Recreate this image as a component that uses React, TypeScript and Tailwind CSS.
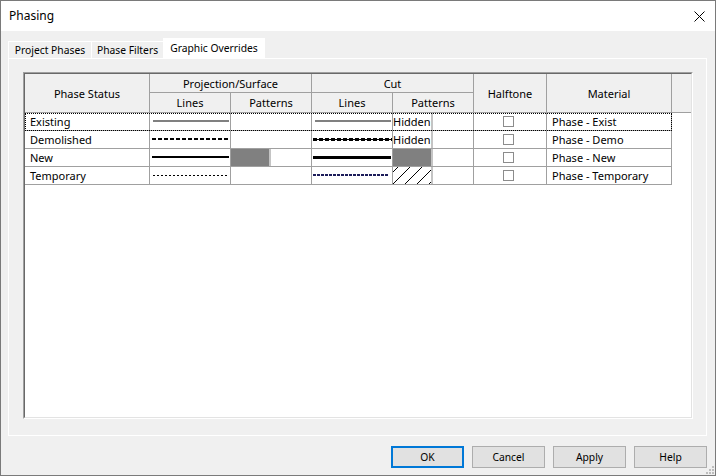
import React from 'react';

interface LineStyle {
    color: string;
    w: number;
    dash?: string;
    core?: boolean;
    x1: number;
    x2: number;
}

type Pattern = 'hidden' | 'solid' | 'hatch' | null;

interface PhaseRow {
    status: string;
    proj: LineStyle;
    projPat: Pattern;
    cut: LineStyle;
    cutPat: Pattern;
    material: string;
}

const rows: PhaseRow[] = [
    {
        status: 'Existing',
        proj: { color: '#808080', w: 2, x1: 3, x2: 79 },
        projPat: null,
        cut: { color: '#808080', w: 2, x1: 3, x2: 79 },
        cutPat: 'hidden',
        material: 'Phase - Exist',
    },
    {
        status: 'Demolished',
        proj: { color: '#000000', w: 2, dash: '4 2', x1: 2, x2: 80 },
        projPat: null,
        cut: { color: '#000000', w: 3, dash: '4 2', core: true, x1: 1, x2: 80 },
        cutPat: 'hidden',
        material: 'Phase - Demo',
    },
    {
        status: 'New',
        proj: { color: '#000000', w: 2, x1: 2, x2: 79 },
        projPat: 'solid',
        cut: { color: '#000000', w: 3, x1: 1, x2: 79 },
        cutPat: 'solid',
        material: 'Phase - New',
    },
    {
        status: 'Temporary',
        proj: { color: '#000000', w: 1, dash: '2 2', x1: 3, x2: 77 },
        projPat: null,
        cut: { color: '#1c1c5a', w: 2, dash: '3 1', x1: 1, x2: 77 },
        cutPat: 'hatch',
        material: 'Phase - Temporary',
    },
];

const LineSample: React.FC<{ line: LineStyle }> = ({ line }) => {
    const y = line.w % 2 ? 8.5 : 8;
    return (
        <svg width="80" height="17" className="block">
            {line.core && <line x1={line.x1} x2={line.x2} y1="8.5" y2="8.5" stroke={line.color} strokeWidth="1" />}
            <line
                x1={line.x1}
                x2={line.x2}
                y1={y}
                y2={y}
                stroke={line.color}
                strokeWidth={line.w}
                strokeDasharray={line.dash}
            />
        </svg>
    );
};

const PatternSample: React.FC<{ pattern: Pattern; edge: boolean }> = ({ pattern, edge }) => {
    if (!pattern && !edge) return null;
    return (
        <div className="flex h-full">
            <div className={`w-[38px] h-full flex items-center overflow-hidden ${pattern === 'solid' ? 'bg-[#808080]' : ''}`}>
                {pattern === 'hidden' && <span className="leading-none">Hidden</span>}
                {pattern === 'hatch' && (
                    <svg width="38" height="17" className="block">
                        {[-12, 0, 12, 24, 36].map(x => (
                            <line key={x} x1={x} y1="17" x2={x + 17} y2="0" stroke="#000" strokeWidth="1" />
                        ))}
                    </svg>
                )}
            </div>
            <div className="w-[2px] h-full bg-[#c4c4c4]" />
        </div>
    );
};

const cols = 'grid grid-cols-[125px_81px_81px_81px_81px_73px_125px_1fr]';
const hcell = 'flex items-center justify-center border-r border-b border-[#a0a0a0] leading-none';
const dcell = 'border-r border-b border-[#a0a0a0] h-[18px]';

const buttons = ['OK', 'Cancel', 'Apply', 'Help'];

export default function App() {
    return (
        <div className="relative w-[716px] h-[476px] border border-[#7a7a7a] bg-[#f0f0f0] flex flex-col overflow-hidden text-black font-['Noto_Sans',sans-serif]">
            {/* title bar */}
            <div className="h-[30px] bg-white flex items-center justify-between pl-[8px] pr-[10px]">
                <span className="text-[12px] leading-none">Phasing</span>
                <svg width="11" height="11" viewBox="0 0 11 11" className="block">
                    <path d="M0.5 0.5 L10.5 10.5 M10.5 0.5 L0.5 10.5" stroke="#000" strokeWidth="1" />
                </svg>
            </div>

            <div className="pt-[7px] flex flex-col">
                {/* tabs */}
                <div className="ml-[7px] h-[20px] flex items-end text-[10.3px] leading-none">
                    <div className="w-[84px] h-[17px] border border-b-0 border-white flex items-center justify-center">
                        Project Phases
                    </div>
                    <div className="w-[72px] h-[17px] border border-l-0 border-b-0 border-white flex items-center justify-center">
                        Phase Filters
                    </div>
                    <div className="-ml-px w-[102px] h-[20px] border border-b-0 border-white bg-white flex items-center justify-center">
                        Graphic Overrides
                    </div>
                </div>

                {/* tab panel */}
                <div className="ml-[7px] w-[699px] h-[378px] border border-white bg-[#f0f0f0] pt-[13px] pl-[14px]">
                    <div className="w-[670px] h-[347px] border border-t-[#a0a0a0] border-l-[#a0a0a0] border-r-white border-b-white">
                        <div className="h-full border border-t-[#696969] border-l-[#696969] border-r-[#e3e3e3] border-b-[#e3e3e3] bg-white text-[11px]">
                            {/* header */}
                            <div className={`${cols} grid-rows-[19px_20px] bg-[#f0f0f0]`}>
                                <div className={`${hcell} row-span-2`}>Phase Status</div>
                                <div className={`${hcell} col-span-2`}>Projection/Surface</div>
                                <div className={`${hcell} col-span-2`}>Cut</div>
                                <div className={`${hcell} row-span-2`}>Halftone</div>
                                <div className={`${hcell} row-span-2`}>Material</div>
                                <div className="row-span-2 border-b border-[#a0a0a0]" />
                                <div className={hcell}>Lines</div>
                                <div className={hcell}>Patterns</div>
                                <div className={hcell}>Lines</div>
                                <div className={hcell}>Patterns</div>
                            </div>

                            {/* rows */}
                            {rows.map((row, i) => (
                                <div key={row.status} className={`${cols} relative`}>
                                    <div className={`${dcell} flex items-center pl-[5px] leading-none`}>{row.status}</div>
                                    <div className={dcell}>
                                        <LineSample line={row.proj} />
                                    </div>
                                    <div className={dcell}>
                                        <PatternSample pattern={row.projPat} edge={false} />
                                    </div>
                                    <div className={dcell}>
                                        <LineSample line={row.cut} />
                                    </div>
                                    <div className={dcell}>
                                        <PatternSample pattern={row.cutPat} edge={true} />
                                    </div>
                                    <div className={`${dcell} flex items-center justify-center pr-[3px]`}>
                                        <div className="w-[11px] h-[11px] border border-[#8c8c8c] bg-white" />
                                    </div>
                                    <div className={`${dcell} flex items-center pl-[5px] leading-none`}>{row.material}</div>
                                    <div />
                                    {i === 0 && (
                                        <div className="pointer-events-none absolute left-0 top-0 w-[647px] h-[18px] border border-dotted border-black" />
                                    )}
                                </div>
                            ))}
                        </div>
                    </div>
                </div>

                {/* buttons */}
                <div className="mt-[10px] pr-[8px] flex justify-end gap-[8px] text-[10.3px] leading-none">
                    {buttons.map(b => (
                        <div
                            key={b}
                            className={`w-[73px] h-[22px] bg-[#e1e1e1] flex items-center justify-center ${
                                b === 'OK' ? 'border-2 border-[#0078d7]' : 'border border-[#adadad]'
                            }`}
                        >
                            {b}
                        </div>
                    ))}
                </div>
            </div>

            {/* size grip */}
            <svg width="8" height="8" className="absolute right-[1px] bottom-[1px]">
                {[
                    [6, 0], [6, 3], [3, 3], [6, 6], [3, 6], [0, 6],
                ].map(([x, y]) => (
                    <rect key={`${x}-${y}`} x={x} y={y} width="2" height="2" fill="#bdbdbd" />
                ))}
            </svg>
        </div>
    );
}
